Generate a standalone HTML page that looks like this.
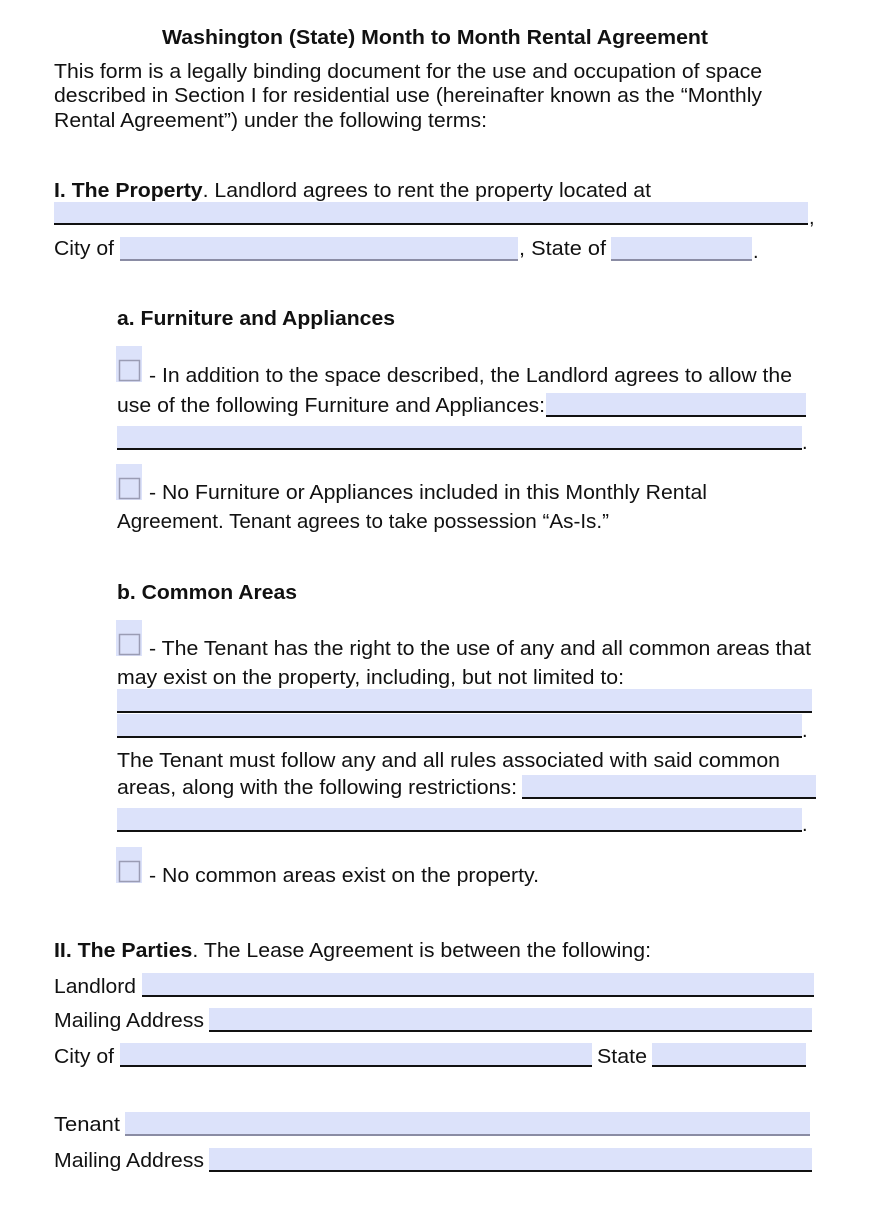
<!DOCTYPE html>
<html><head><meta charset="utf-8"><style>html,body{margin:0;padding:0;background:#fff;width:870px;height:1224px;overflow:hidden}svg text{font-family:"Liberation Sans",Arial,sans-serif}</style></head>
<body>
<svg width="870" height="1224" viewBox="0 0 870 1224" xmlns="http://www.w3.org/2000/svg" font-family="'Liberation Sans', Arial, sans-serif" font-size="20" fill="#111">
<g fill="#dce2fa">
<rect x="54" y="202" width="754" height="22"/>
<rect x="120" y="237" width="398" height="23"/>
<rect x="611" y="237" width="141" height="23"/>
<rect x="546" y="393" width="260" height="23"/>
<rect x="117" y="426" width="685" height="23"/>
<rect x="117" y="689" width="695" height="23"/>
<rect x="117" y="714" width="685" height="23"/>
<rect x="522" y="775" width="294" height="23"/>
<rect x="117" y="808" width="685" height="23"/>
<rect x="142" y="973" width="672" height="23"/>
<rect x="209" y="1008" width="603" height="23"/>
<rect x="120" y="1043" width="472" height="23"/>
<rect x="652" y="1043" width="154" height="23"/>
<rect x="125" y="1112" width="685" height="23"/>
<rect x="209" y="1148" width="603" height="23"/>
<rect x="116" y="346" width="26" height="36"/>
<rect x="116" y="464" width="26" height="36"/>
<rect x="116" y="620" width="26" height="36"/>
<rect x="116" y="847" width="26" height="36"/>
</g>
<g fill="none" stroke="#9a9cb4" stroke-width="1.5">
<rect x="119.5" y="360.5" width="20" height="20"/>
<rect x="119.5" y="478.5" width="20" height="20"/>
<rect x="119.5" y="634.5" width="20" height="20"/>
<rect x="119.5" y="861.5" width="20" height="20"/>
</g>
<g stroke="#111" stroke-width="2">
<line x1="54" y1="224" x2="808" y2="224"/>
<line x1="546" y1="416" x2="806" y2="416"/>
<line x1="117" y1="449" x2="802" y2="449"/>
<line x1="117" y1="712" x2="812" y2="712"/>
<line x1="117" y1="737" x2="802" y2="737"/>
<line x1="522" y1="798" x2="816" y2="798"/>
<line x1="117" y1="831" x2="802" y2="831"/>
<line x1="142" y1="996" x2="814" y2="996"/>
<line x1="209" y1="1031" x2="812" y2="1031"/>
<line x1="120" y1="1066" x2="592" y2="1066"/>
<line x1="652" y1="1066" x2="806" y2="1066"/>
<line x1="209" y1="1171" x2="812" y2="1171"/>
</g>
<g stroke="#8a8ca4" stroke-width="2">
<line x1="120" y1="260" x2="518" y2="260"/>
<line x1="611" y1="260" x2="752" y2="260"/>
<line x1="125" y1="1135" x2="810" y2="1135"/>
</g>
<text x="162" y="44" font-weight="bold" textLength="546" lengthAdjust="spacingAndGlyphs">Washington (State) Month to Month Rental Agreement</text>
<text x="54" y="78" textLength="708" lengthAdjust="spacingAndGlyphs">This form is a legally binding document for the use and occupation of space</text>
<text x="54" y="102" textLength="708" lengthAdjust="spacingAndGlyphs">described in Section I for residential use (hereinafter known as the “Monthly</text>
<text x="54" y="127" textLength="433" lengthAdjust="spacingAndGlyphs">Rental Agreement”) under the following terms:</text>
<text x="54" y="197" textLength="597" lengthAdjust="spacingAndGlyphs"><tspan font-weight="bold">I. The Property</tspan>. Landlord agrees to rent the property located at</text>
<text x="809" y="224">,</text>
<text x="54" y="255" textLength="60" lengthAdjust="spacingAndGlyphs">City of</text>
<text x="519" y="255" textLength="87" lengthAdjust="spacingAndGlyphs">, State of</text>
<text x="753" y="258">.</text>
<text x="117" y="325" font-weight="bold" textLength="278" lengthAdjust="spacingAndGlyphs">a. Furniture and Appliances</text>
<text x="149" y="382" textLength="643" lengthAdjust="spacingAndGlyphs">- In addition to the space described, the Landlord agrees to allow the</text>
<text x="117" y="412" textLength="428" lengthAdjust="spacingAndGlyphs">use of the following Furniture and Appliances:</text>
<text x="802" y="449">.</text>
<text x="149" y="499" textLength="558" lengthAdjust="spacingAndGlyphs">- No Furniture or Appliances included in this Monthly Rental</text>
<text x="117" y="528" textLength="492" lengthAdjust="spacingAndGlyphs">Agreement. Tenant agrees to take possession “As-Is.”</text>
<text x="117" y="599" font-weight="bold" textLength="180" lengthAdjust="spacingAndGlyphs">b. Common Areas</text>
<text x="149" y="655" textLength="662" lengthAdjust="spacingAndGlyphs">- The Tenant has the right to the use of any and all common areas that</text>
<text x="117" y="684" textLength="507" lengthAdjust="spacingAndGlyphs">may exist on the property, including, but not limited to:</text>
<text x="802" y="737">.</text>
<text x="117" y="767" textLength="663" lengthAdjust="spacingAndGlyphs">The Tenant must follow any and all rules associated with said common</text>
<text x="117" y="794" textLength="400" lengthAdjust="spacingAndGlyphs">areas, along with the following restrictions:</text>
<text x="802" y="831">.</text>
<text x="149" y="882" textLength="390" lengthAdjust="spacingAndGlyphs">- No common areas exist on the property.</text>
<text x="54" y="957" textLength="597" lengthAdjust="spacingAndGlyphs"><tspan font-weight="bold">II. The Parties</tspan>. The Lease Agreement is between the following:</text>
<text x="54" y="993" textLength="82" lengthAdjust="spacingAndGlyphs">Landlord</text>
<text x="54" y="1027" textLength="150" lengthAdjust="spacingAndGlyphs">Mailing Address</text>
<text x="54" y="1063" textLength="60" lengthAdjust="spacingAndGlyphs">City of</text>
<text x="597" y="1063" textLength="50" lengthAdjust="spacingAndGlyphs">State</text>
<text x="54" y="1131" textLength="66" lengthAdjust="spacingAndGlyphs">Tenant</text>
<text x="54" y="1167" textLength="150" lengthAdjust="spacingAndGlyphs">Mailing Address</text>
</svg>
</body></html>
